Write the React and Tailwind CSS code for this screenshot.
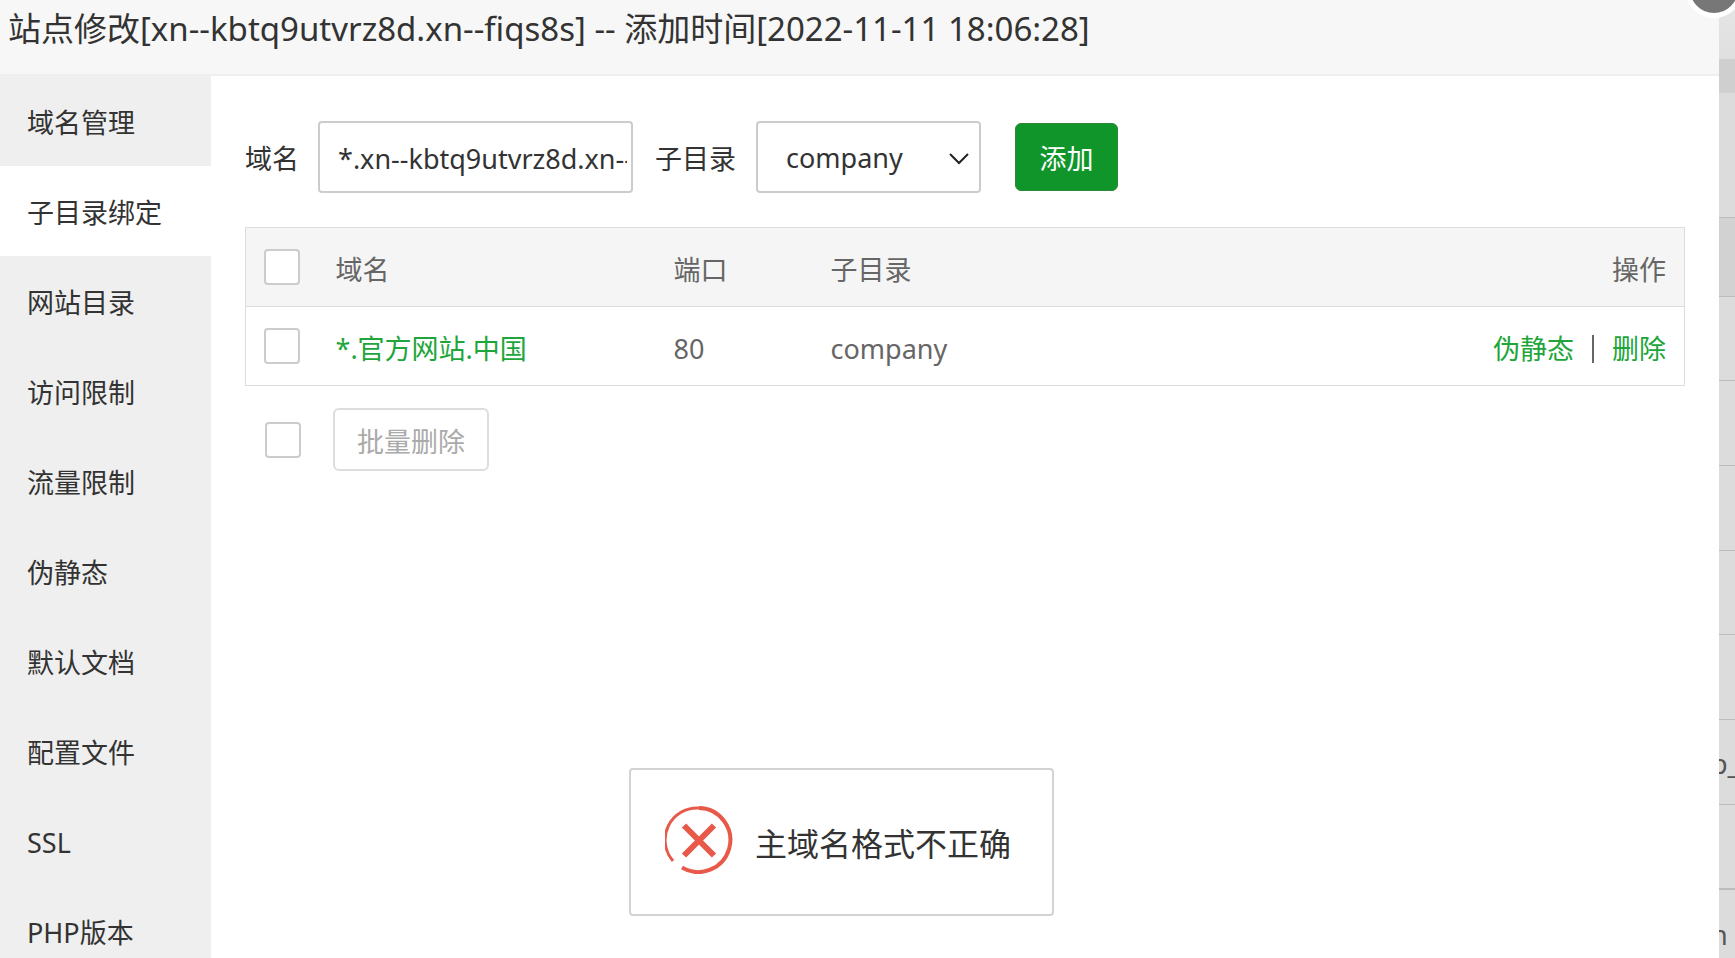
import React from 'react';

const menuItems = ['域名管理', '子目录绑定', '网站目录', '访问限制', '流量限制', '伪静态', '默认文档', '配置文件', 'SSL', 'PHP版本'];
const activeItem = '子目录绑定';

const bindings = [
  { id: 1, domain: '*.官方网站.中国', port: 80, path: 'company' },
];

// Rows of the site list that stay visible behind the dialog
const backdropRows = [
  { id: 'nav', className: 'h-[59px] bg-gradient-to-b from-[#e6e6e6] to-[#dfdfdf]' },
  { id: 'gap', className: 'h-[34px] bg-[#cfcfcf]' },
  { id: 'tools', className: 'h-[125px] border-b border-[#bcbcbc] bg-[#dcdcdc]' },
  { id: 'head', className: 'h-[79px] border-b border-[#bcbcbc] bg-[#d2d2d2]' },
  { id: 'r1', className: 'h-[84px] border-b border-[#bcbcbc]' },
  { id: 'r2', className: 'h-[85px] border-b border-[#bcbcbc]' },
  { id: 'r3', className: 'h-[85px] border-b border-[#bcbcbc]' },
  { id: 'r4', className: 'h-[84px] border-b border-[#bcbcbc]' },
  { id: 'r5', className: 'h-[85px] border-b border-[#bcbcbc]' },
  { id: 'r6', className: 'h-[85px] border-b border-[#bcbcbc] pt-1', text: 'p_' },
  { id: 'r7', className: 'h-[85px] border-b-2 border-[#bcbcbc]' },
  { id: 'r8', className: 'h-[85px] pt-1', text: 'h' },
];

const Checkbox = ({ label }) => (
  <input
    type="checkbox"
    aria-label={label}
    className="block size-9 shrink-0 appearance-none rounded border-2 border-[#ccc] bg-white checked:bg-[#20a53a]"
  />
);

const Sidebar = () => (
  <nav className="w-[211px] shrink-0 bg-[#efefef]">
    {menuItems.map((item) => (
      <button
        key={item}
        type="button"
        className={`block h-[90px] w-full pl-[27px] pt-1 text-left ${item === activeItem ? 'bg-white' : ''}`}
      >
        {item}
      </button>
    ))}
  </nav>
);

const AddForm = () => (
  <form className="flex items-center" onSubmit={(e) => e.preventDefault()}>
    <label htmlFor="domain" className="mr-[19px] pt-1">域名</label>
    <input
      id="domain"
      type="text"
      defaultValue="*.xn--kbtq9utvrz8d.xn--fiqs8s"
      className="mr-[22px] h-[72px] w-[315px] rounded border-2 border-[#ccc] bg-white pl-[18px] pr-1 pt-0.5 outline-none"
    />
    <label htmlFor="path" className="mr-5 pt-1">子目录</label>
    <div className="relative mr-[34px]">
      <select
        id="path"
        defaultValue="company"
        className="block h-[72px] w-[225px] appearance-none rounded border-2 border-[#ccc] bg-white pl-7 pt-0.5 outline-none"
      >
        <option value="company">company</option>
      </select>
      <svg
        className="pointer-events-none absolute right-3 top-8 h-3 w-5"
        viewBox="0 0 20 12"
        fill="none"
        stroke="#222"
        strokeWidth="2"
      >
        <path d="M1 1l9 9 9-9" />
      </svg>
    </div>
    <button type="submit" className="h-[68px] w-[103px] rounded-md border border-[#2b8a38] bg-[#10952a] pt-1 text-white">
      添加
    </button>
  </form>
);

const BindingTable = () => (
  <table className="mt-[34px] w-full table-fixed border border-[#ddd] text-[#666]">
    <thead>
      <tr className="h-[79px] border-b border-[#ddd] bg-[#f5f5f5] text-left">
        <th className="w-[90px] pl-[18px]"><Checkbox label="全选" /></th>
        <th className="w-[338px] pt-1.5 font-normal">域名</th>
        <th className="w-[157px] pt-1.5 font-normal">端口</th>
        <th className="pt-1.5 font-normal">子目录</th>
        <th className="pr-[18px] pt-1.5 text-right font-normal">操作</th>
      </tr>
    </thead>
    <tbody>
      {bindings.map((row) => (
        <tr key={row.id} className="h-[79px]">
          <td className="pl-[18px]"><Checkbox label={row.domain} /></td>
          <td className="pt-1.5"><a href="#domain" className="text-[#20a53a]">{row.domain}</a></td>
          <td className="pt-1.5">{row.port}</td>
          <td className="pt-1.5">{row.path}</td>
          <td className="pr-[18px] pt-1.5">
            <div className="flex items-center justify-end gap-[18px]">
              <a href="#rewrite" className="text-[#20a53a]">伪静态</a>
              <span className="h-7 w-[2px] bg-[#666]" />
              <a href="#delete" className="text-[#20a53a]">删除</a>
            </div>
          </td>
        </tr>
      ))}
    </tbody>
  </table>
);

const Toast = ({ message }) => (
  <div
    role="alert"
    className="absolute left-[629px] top-[768px] flex h-[148px] w-[425px] items-center gap-[22px] rounded border-2 border-[#d3d3d3] bg-white pl-[34px] text-[32px]"
  >
    <svg className="-mt-1 size-[68px] shrink-0" viewBox="0 0 68 68" fill="none" stroke="#e8594a">
      <path d="M8 55A32 32 0 0 1 34 2" strokeWidth="3" />
      <path d="M34 2A32 32 0 1 1 17 61.500" strokeWidth="4" />
      <path d="M19 19.500L49 49.500M49 19.500L19 49.500" strokeWidth="6" />
    </svg>
    <span className="pt-1">{message}</span>
  </div>
);

const Backdrop = () => (
  <div className="w-4 shrink-0 overflow-hidden bg-[#dcdcdc]">
    {backdropRows.map((row) => (
      <div key={row.id} className={`flex items-center ${row.className}`}>
        {row.text && <span className="-ml-2 text-[#555]">{row.text}</span>}
      </div>
    ))}
  </div>
);

export default function App() {
  return (
    <div className="relative flex h-screen overflow-hidden bg-[#dcdcdc] font-['Noto_Sans','Noto_Sans_CJK_SC',sans-serif] text-[27px] leading-9 text-[#333]">
      <section className="flex min-w-0 flex-1 flex-col bg-white">
        <header className="h-[76px] shrink-0 border-b-2 border-[#eee] bg-[#f7f7f7] pl-2 pt-2">
          <h1 className="whitespace-nowrap text-[33px] leading-[42px]">
            站点修改[xn--kbtq9utvrz8d.xn--fiqs8s] -- 添加时间[2022-11-11 18:06:28]
          </h1>
        </header>
        <div className="flex min-h-0 flex-1">
          <Sidebar />
          <main className="min-w-0 flex-1 px-[34px] pt-[45px]">
            <AddForm />
            <BindingTable />
            <div className="mt-[22px] flex items-center gap-8 pl-5">
              <Checkbox label="选择全部" />
              <button type="button" disabled className="h-[63px] w-[156px] rounded-md border-2 border-[#ddd] pt-1 text-[#aaa]">
                批量删除
              </button>
            </div>
          </main>
        </div>
      </section>
      <Backdrop />
      <button
        type="button"
        aria-label="关闭"
        className="absolute -right-2 -top-10 size-[58px] rounded-full border-[5px] border-white bg-[#777]"
      />
      <Toast message="主域名格式不正确" />
    </div>
  );
}
